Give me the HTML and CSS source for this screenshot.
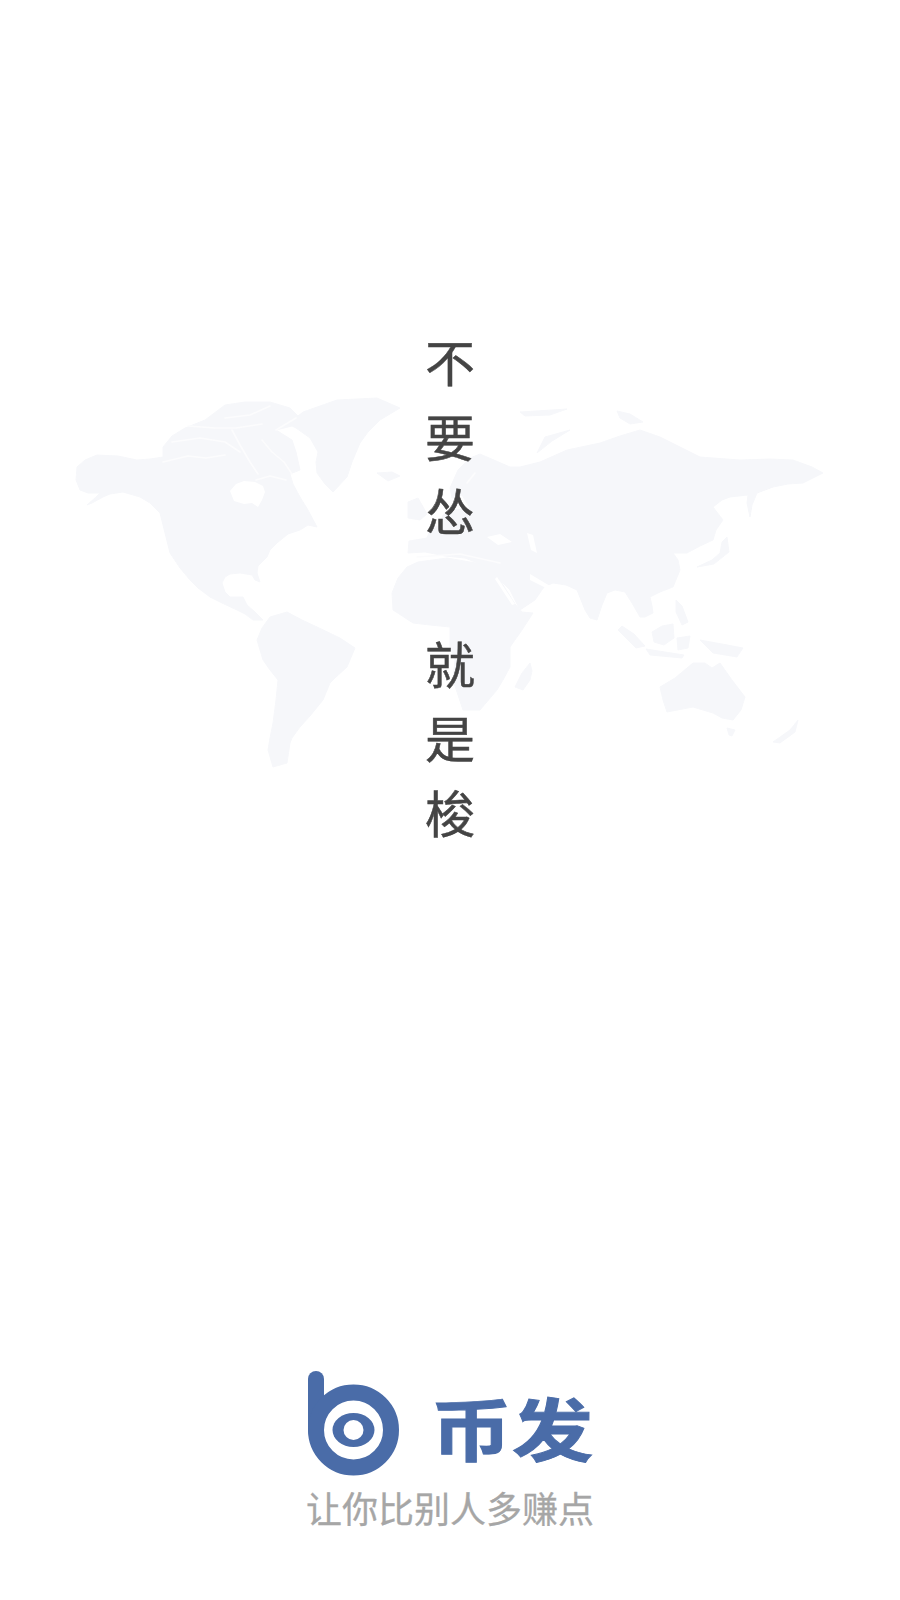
FILE: index.html
```html
<!DOCTYPE html>
<html lang="zh-CN">
<head>
<meta charset="utf-8">
<title>币发</title>
<link rel="stylesheet" href="styles.css">
</head>
<body>
<main class="screen">
  <svg class="map" viewBox="60 380 780 400" aria-hidden="true">
    <g class="land">
      <path d="M77 467L85 460L97 455L118 456L137 460L150 459L163 457L163 447L172 436L185 428L205 420L225 405L245 402L270 402L290 408L300 418L292 426L276 430L292 440L296 452L300 470L290 474L293 484L300 497L308 510L317 527L308 525L300 530L288 534L277 543L270 550L267 557L258 566L257 573L260 582L255 580L252 575L240 573L230 574L225 577L222 583L225 592L230 597L243 597L247 605L255 612L263 620L253 620L245 614L237 610L222 603L210 597L198 588L190 580L180 568L170 553L165 533L160 513L150 503L140 497L123 492L110 494L103 497L92 503L87 505L96 497L100 493L88 493L80 490L76 480Z"/>
      <path d="M303 412L337 400L377 398L400 408L390 414L380 420L368 432L360 443L352 462L347 477L333 492L325 484L317 473L316 462L318 452L310 438L296 428L288 424Z"/>
      <path d="M377 473L392 472L400 476L388 481Z"/>
      <path d="M257 640L262 628L270 617L287 612L302 620L317 627L340 638L355 648L347 667L335 678L330 683L323 700L310 716L300 727L292 738L290 743L287 763L273 767L268 750L270 738L273 723L276 700L278 680L270 670L263 660Z"/>
      <path d="M392 593L398 578L407 567L418 562L447 558L470 562L485 563L497 572L500 580L515 604L522 612L533 613L522 630L510 647L510 667L503 680L497 690L480 710L463 710L458 695L453 680L455 660L450 647L450 627L430 625L413 623L393 610Z"/>
      <path d="M408 553L409 541L427 538L430 530L440 525L443 515L455 510L470 508L462 495L452 498L450 488L458 470L470 458L480 454L510 467L520 467L540 462L567 450L600 443L620 436L640 430L660 437L680 447L700 457L740 460L770 459L793 460L812 467L823 473L803 483L788 484L773 487L757 493L752 505L750 517L747 503L748 495L730 497L722 500L713 507L723 520L716 530L713 540L700 546L687 553L673 553L678 560L680 570L673 587L660 592L650 597L652 606L653 613L645 617L640 617L632 603L625 592L615 590L607 593L602 605L597 620L590 618L585 610L577 590L566 585L553 583L544 587L535 600L520 610L510 590L497 577L485 566L465 558L445 556L425 552Z"/>
      <path d="M408 502L418 498L422 505L427 514L420 520L408 518Z"/>
      <path d="M530 663L522 673L515 687L523 690L530 680L532 671Z"/>
      <path d="M537 453L545 437L570 430L552 441Z"/>
      <path d="M520 412L567 409L550 415L525 416Z"/>
      <path d="M617 411L630 414L643 422L630 424L620 418Z"/>
      <path d="M697 567L712 560L720 553L722 542L727 537L729 552L714 564Z"/>
      <path d="M622 626L634 634L645 646L636 648L626 638L618 630Z"/>
      <path d="M646 649L665 652L684 655L682 658L650 655Z"/>
      <path d="M652 632L662 626L673 624L674 638L664 645L654 642Z"/>
      <path d="M677 638L690 636L688 648L678 650Z"/>
      <path d="M676 600L682 606L688 622L682 625L676 612Z"/>
      <path d="M700 640L722 644L743 648L737 657L713 653Z"/>
      <path d="M660 687L675 678L693 663L705 663L712 668L720 663L732 680L745 697L741 710L733 720L722 718L713 713L693 707L667 712L663 700Z"/>
      <path d="M727 728L735 730L732 736L729 735Z"/>
      <path d="M773 742L790 730L798 720L795 732L780 743Z"/>
    </g>
    <g class="water">
      <path d="M230 491L236 484L244 481L255 482L263 486L265 492L262 500L258 507L252 503L244 504L234 501Z"/>
      <path d="M487 537L500 534L512 542L498 545Z"/>
      <path d="M527 533L533 535L537 553L531 550Z"/>
      <path d="M530 574L550 586L546 588L530 580Z"/>
      <path d="M497 577L515 604L512 605L495 579Z"/>
    </g>
    <g class="channels">
      <path d="M163 462L188 456L206 458L225 455"/>
      <path d="M172 442L200 438L225 442L240 452"/>
      <path d="M188 426L215 428L236 428L262 424"/>
      <path d="M225 418L250 415L270 406"/>
      <path d="M232 430L240 445L250 462L258 474"/>
      <path d="M262 440L272 452L284 462L292 474"/>
      <path d="M256 480L270 476L286 480"/>
      <path d="M276 430L296 418"/>
      <path d="M467 483L475 473"/>
      <path d="M417 557L460 554L500 563"/>
    </g>
  </svg>

  <div class="slogan">
    <div class="phrase"><span>不</span><span>要</span><span>怂</span></div>
    <div class="phrase"><span>就</span><span>是</span><span>梭</span></div>
  </div>

  <footer class="brand">
    <div class="logo">
      <svg class="mark" viewBox="0 0 92 106" aria-hidden="true">
        <path class="mark-stroke" d="M8 8V60"/>
        <circle class="mark-ring" cx="45.5" cy="59" r="37.5"/>
        <ellipse class="mark-eye" cx="45.5" cy="59" rx="21" ry="17"/>
        <circle class="mark-pupil" cx="45.5" cy="59" r="10"/>
      </svg>
      <span class="name">币发</span>
    </div>
    <p class="tagline">让你比别人多赚点</p>
  </footer>
</main>
</body>
</html>
```

FILE: styles.css
```css
* {
  box-sizing: border-box;
}

html,
body {
  margin: 0;
  padding: 0;
  background: #ffffff;
}

.screen {
  position: relative;
  width: 900px;
  height: 1600px;
  display: flex;
  flex-direction: column;
  align-items: center;
  padding-top: 323px;
  padding-bottom: 71px;
  overflow: hidden;
  font-family: "Noto Sans CJK SC", "Noto Sans", sans-serif;
}

.map {
  position: absolute;
  left: 60px;
  top: 380px;
  width: 780px;
  height: 400px;
  filter: blur(0.7px);
}

.land {
  fill: #f6f7fa;
  stroke: #f6f7fa;
  stroke-width: 1;
  stroke-linejoin: round;
}

.water {
  fill: #ffffff;
}

.channels {
  fill: none;
  stroke: #fcfcfd;
  stroke-width: 1.6;
  stroke-linecap: round;
  stroke-linejoin: round;
}

.slogan {
  position: relative;
  display: flex;
  flex-direction: column;
  gap: 78px;
}

.phrase {
  display: flex;
  flex-direction: column;
  align-items: center;
}

.phrase span {
  display: block;
  font-size: 50px;
  line-height: 74.5px;
  font-weight: 400;
  color: #444444;
  -webkit-text-stroke: 0.5px #444444;
}

.brand {
  margin-top: auto;
  display: flex;
  flex-direction: column;
  align-items: center;
}

.logo {
  display: flex;
  align-items: center;
  gap: 40px;
  height: 106px;
}

.mark {
  width: 92px;
  height: 106px;
  flex: none;
}

.mark-stroke {
  fill: none;
  stroke: #4a6ca8;
  stroke-width: 16;
  stroke-linecap: round;
}

.mark-ring {
  fill: none;
  stroke: #4a6ca8;
  stroke-width: 16;
}

.mark-eye {
  fill: #4a6ca8;
}

.mark-pupil {
  fill: #ffffff;
}

.name {
  font-size: 76px;
  line-height: 90px;
  font-weight: 700;
  color: #4a6ca8;
  -webkit-text-stroke: 1px #4a6ca8;
  transform: translate(-4px, 2px) scale(1.07, 0.9);
}

.tagline {
  margin: 8px 0 0;
  font-size: 36px;
  line-height: 44px;
  color: #a6a6a6;
  -webkit-text-stroke: 0.3px #a6a6a6;
  white-space: nowrap;
}
```
